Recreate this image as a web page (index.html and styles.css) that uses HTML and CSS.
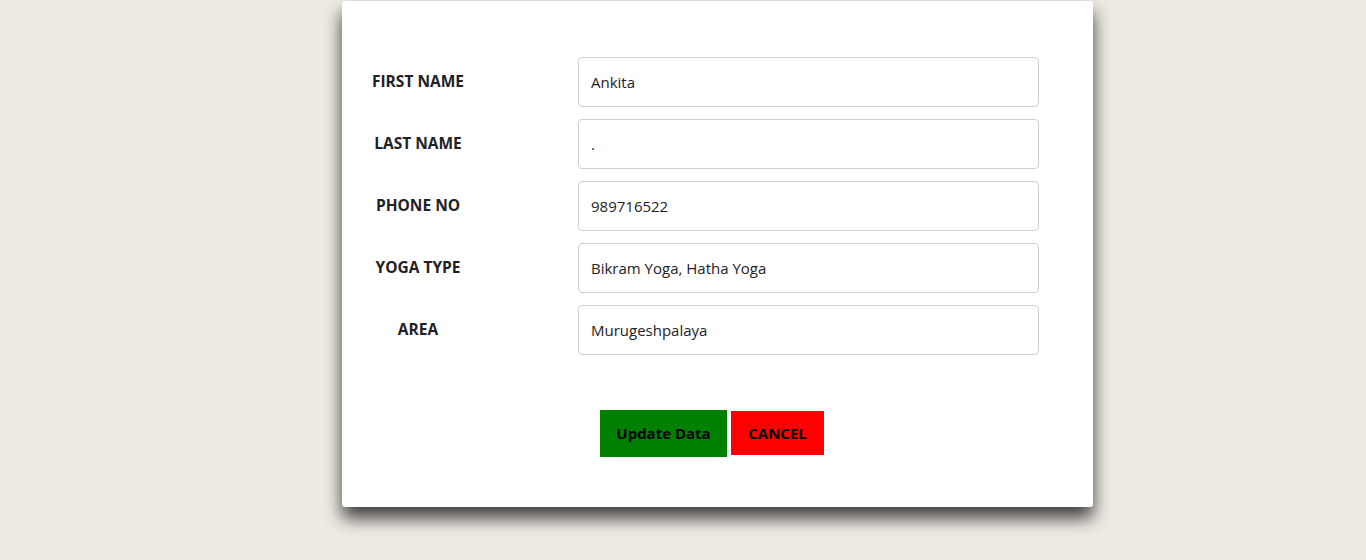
FILE: index.html
```html
<!DOCTYPE html>
<html>
<head>
<meta charset="utf-8">
<link rel="stylesheet" href="styles.css">
</head>
<body>
<div class="page">
  <div class="card">
    <form class="form">
      <div class="row">
        <label class="label">FIRST NAME</label>
        <input class="input" type="text" value="Ankita">
      </div>
      <div class="row">
        <label class="label">LAST NAME</label>
        <input class="input" type="text" value=".">
      </div>
      <div class="row">
        <label class="label">PHONE NO</label>
        <input class="input" type="text" value="989716522">
      </div>
      <div class="row">
        <label class="label">YOGA TYPE</label>
        <input class="input" type="text" value="Bikram Yoga, Hatha Yoga">
      </div>
      <div class="row">
        <label class="label">AREA</label>
        <input class="input" type="text" value="Murugeshpalaya">
      </div>
      <div class="actions">
        <button type="button" class="btn btn-update">Update Data</button>
        <button type="button" class="btn btn-cancel">CANCEL</button>
      </div>
    </form>
  </div>
</div>
</body>
</html>
```

FILE: styles.css
```css
html, body {
  margin: 0;
  padding: 0;
  background: #efebe4;
  height: 100%;
  overflow: hidden;
}
body {
  font-family: "Open Sans", "Noto Sans", "Liberation Sans", sans-serif;
  color: #212529;
}
.page {
  display: flex;
  justify-content: flex-start;
  padding: 1px 0 0 342px;
}
.card {
  width: 751px;
  height: 506px;
  box-sizing: border-box;
  background: #fff;
  border-radius: 3px;
  box-shadow: 0 11px 18px rgba(0, 0, 0, 0.75);
  padding-top: 56px;
}
.form {
  display: flex;
  flex-direction: column;
  gap: 12px;
}
.row {
  display: grid;
  grid-template-columns: 152px 461px;
  column-gap: 84px;
  align-items: center;
}
.label {
  text-align: center;
  font-weight: 700;
  font-size: 15.5px;
  color: #1e2125;
  padding-bottom: 2px;
}
.input {
  box-sizing: border-box;
  width: 461px;
  height: 50px;
  border: 1px solid #cfcfcf;
  border-radius: 4px;
  padding: 0 12px;
  font-family: inherit;
  font-size: 15px;
  color: #1e2125;
  outline: none;
  background: #fff;
}
.actions {
  margin-top: 43px;
  display: flex;
  justify-content: center;
  align-items: center;
  gap: 4px;
  margin-left: -11px;
}
.btn {
  border: none;
  border-radius: 0;
  font-family: inherit;
  font-weight: 700;
  font-size: 15px;
  color: #000;
  cursor: pointer;
  padding: 0 0 1px 0;
}
.btn-update {
  background: #008000;
  width: 127px;
  height: 47px;
}
.btn-cancel {
  background: #ff0000;
  width: 93px;
  height: 44px;
  margin-top: -1px;
}
```
